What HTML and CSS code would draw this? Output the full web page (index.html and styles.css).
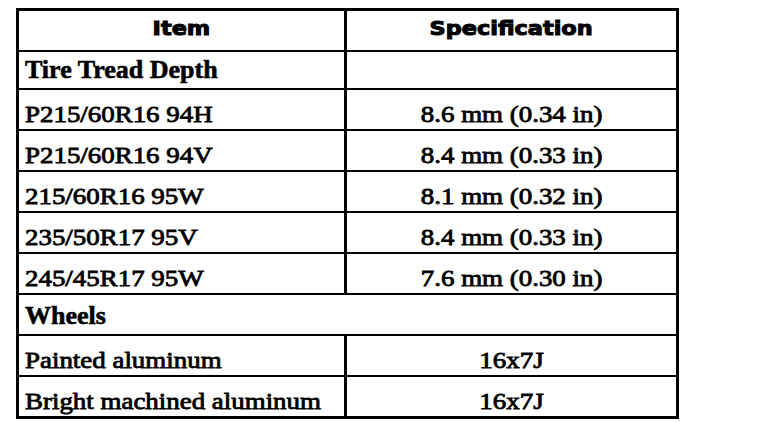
FILE: index.html
```html
<!DOCTYPE html>
<html lang="en">
<head>
<meta charset="utf-8">
<title>Tire and Wheel Specifications</title>
<link rel="stylesheet" href="styles.css">
</head>
<body>
<table class="spec">
  <thead>
    <tr>
      <th class="col-item"><span class="hd">Item</span></th>
      <th class="col-spec"><span class="hd">Specification</span></th>
    </tr>
  </thead>
  <tbody>
    <tr class="sub first">
      <td class="col-item"><span class="st">Tire Tread Depth</span></td>
      <td class="col-spec"></td>
    </tr>
    <tr>
      <td class="col-item"><span class="tx">P215/60R16 94H</span></td>
      <td class="col-spec"><span class="tx">8.6 mm (0.34 in)</span></td>
    </tr>
    <tr>
      <td class="col-item"><span class="tx">P215/60R16 94V</span></td>
      <td class="col-spec"><span class="tx">8.4 mm (0.33 in)</span></td>
    </tr>
    <tr>
      <td class="col-item"><span class="tx">215/60R16 95W</span></td>
      <td class="col-spec"><span class="tx">8.1 mm (0.32 in)</span></td>
    </tr>
    <tr>
      <td class="col-item"><span class="tx">235/50R17 95V</span></td>
      <td class="col-spec"><span class="tx">8.4 mm (0.33 in)</span></td>
    </tr>
    <tr>
      <td class="col-item"><span class="tx">245/45R17 95W</span></td>
      <td class="col-spec"><span class="tx">7.6 mm (0.30 in)</span></td>
    </tr>
    <tr class="sub">
      <td class="span" colspan="2"><span class="st">Wheels</span></td>
    </tr>
    <tr>
      <td class="col-item"><span class="tx">Painted aluminum</span></td>
      <td class="col-spec"><span class="tx">16x7J</span></td>
    </tr>
    <tr class="last">
      <td class="col-item"><span class="tx">Bright machined aluminum</span></td>
      <td class="col-spec"><span class="tx">16x7J</span></td>
    </tr>
  </tbody>
</table>
</body>
</html>
```

FILE: styles.css
```css
html, body {
  margin: 0;
  padding: 0;
  background: #ffffff;
}

body {
  padding: 8px 0 0 16px;
  color: #000000;
  font-family: "Liberation Serif", "Times New Roman", serif;
}

.spec {
  width: 663px;
  border: 3px solid #000;
  border-collapse: separate;
  border-spacing: 0;
  table-layout: fixed;
}

.spec th,
.spec td {
  box-sizing: border-box;
  height: 41px;
  padding: 0;
  border-bottom: 2px solid #000;
  vertical-align: bottom;
}

.spec .col-item {
  width: 328px;
  border-right: 3px solid #000;
  padding-left: 6px;
  text-align: left;
}

.spec .col-spec {
  text-align: center;
}

.spec th {
  vertical-align: top;
  padding-top: 6px;
  text-align: center;
}

.spec th.col-item {
  text-align: center;
  padding-left: 0;
}

.hd {
  display: inline-block;
  font-family: "DejaVu Sans", "Liberation Sans", sans-serif;
  font-weight: bold;
  font-size: 19px;
  line-height: 22px;
  transform: scaleX(1.18);
  transform-origin: center;
  -webkit-text-stroke: 1px #000;
}

.spec td {
  padding-bottom: 1px;
}

.spec .sub td {
  padding-bottom: 3px;
}

.spec .sub.first td {
  height: 38px;
}

.spec .span {
  padding-left: 6px;
  text-align: left;
}

.spec .last td {
  border-bottom: none;
  height: 39px;
}

.st {
  display: inline-block;
  font-weight: bold;
  font-size: 26px;
  line-height: 30px;
  -webkit-text-stroke: 0.6px #000;
}

.tx {
  display: inline-block;
  font-size: 23px;
  line-height: 26px;
  transform: scaleX(1.17);
  transform-origin: left center;
  -webkit-text-stroke: 0.8px #000;
}

.col-spec .tx {
  transform-origin: center;
}
```
